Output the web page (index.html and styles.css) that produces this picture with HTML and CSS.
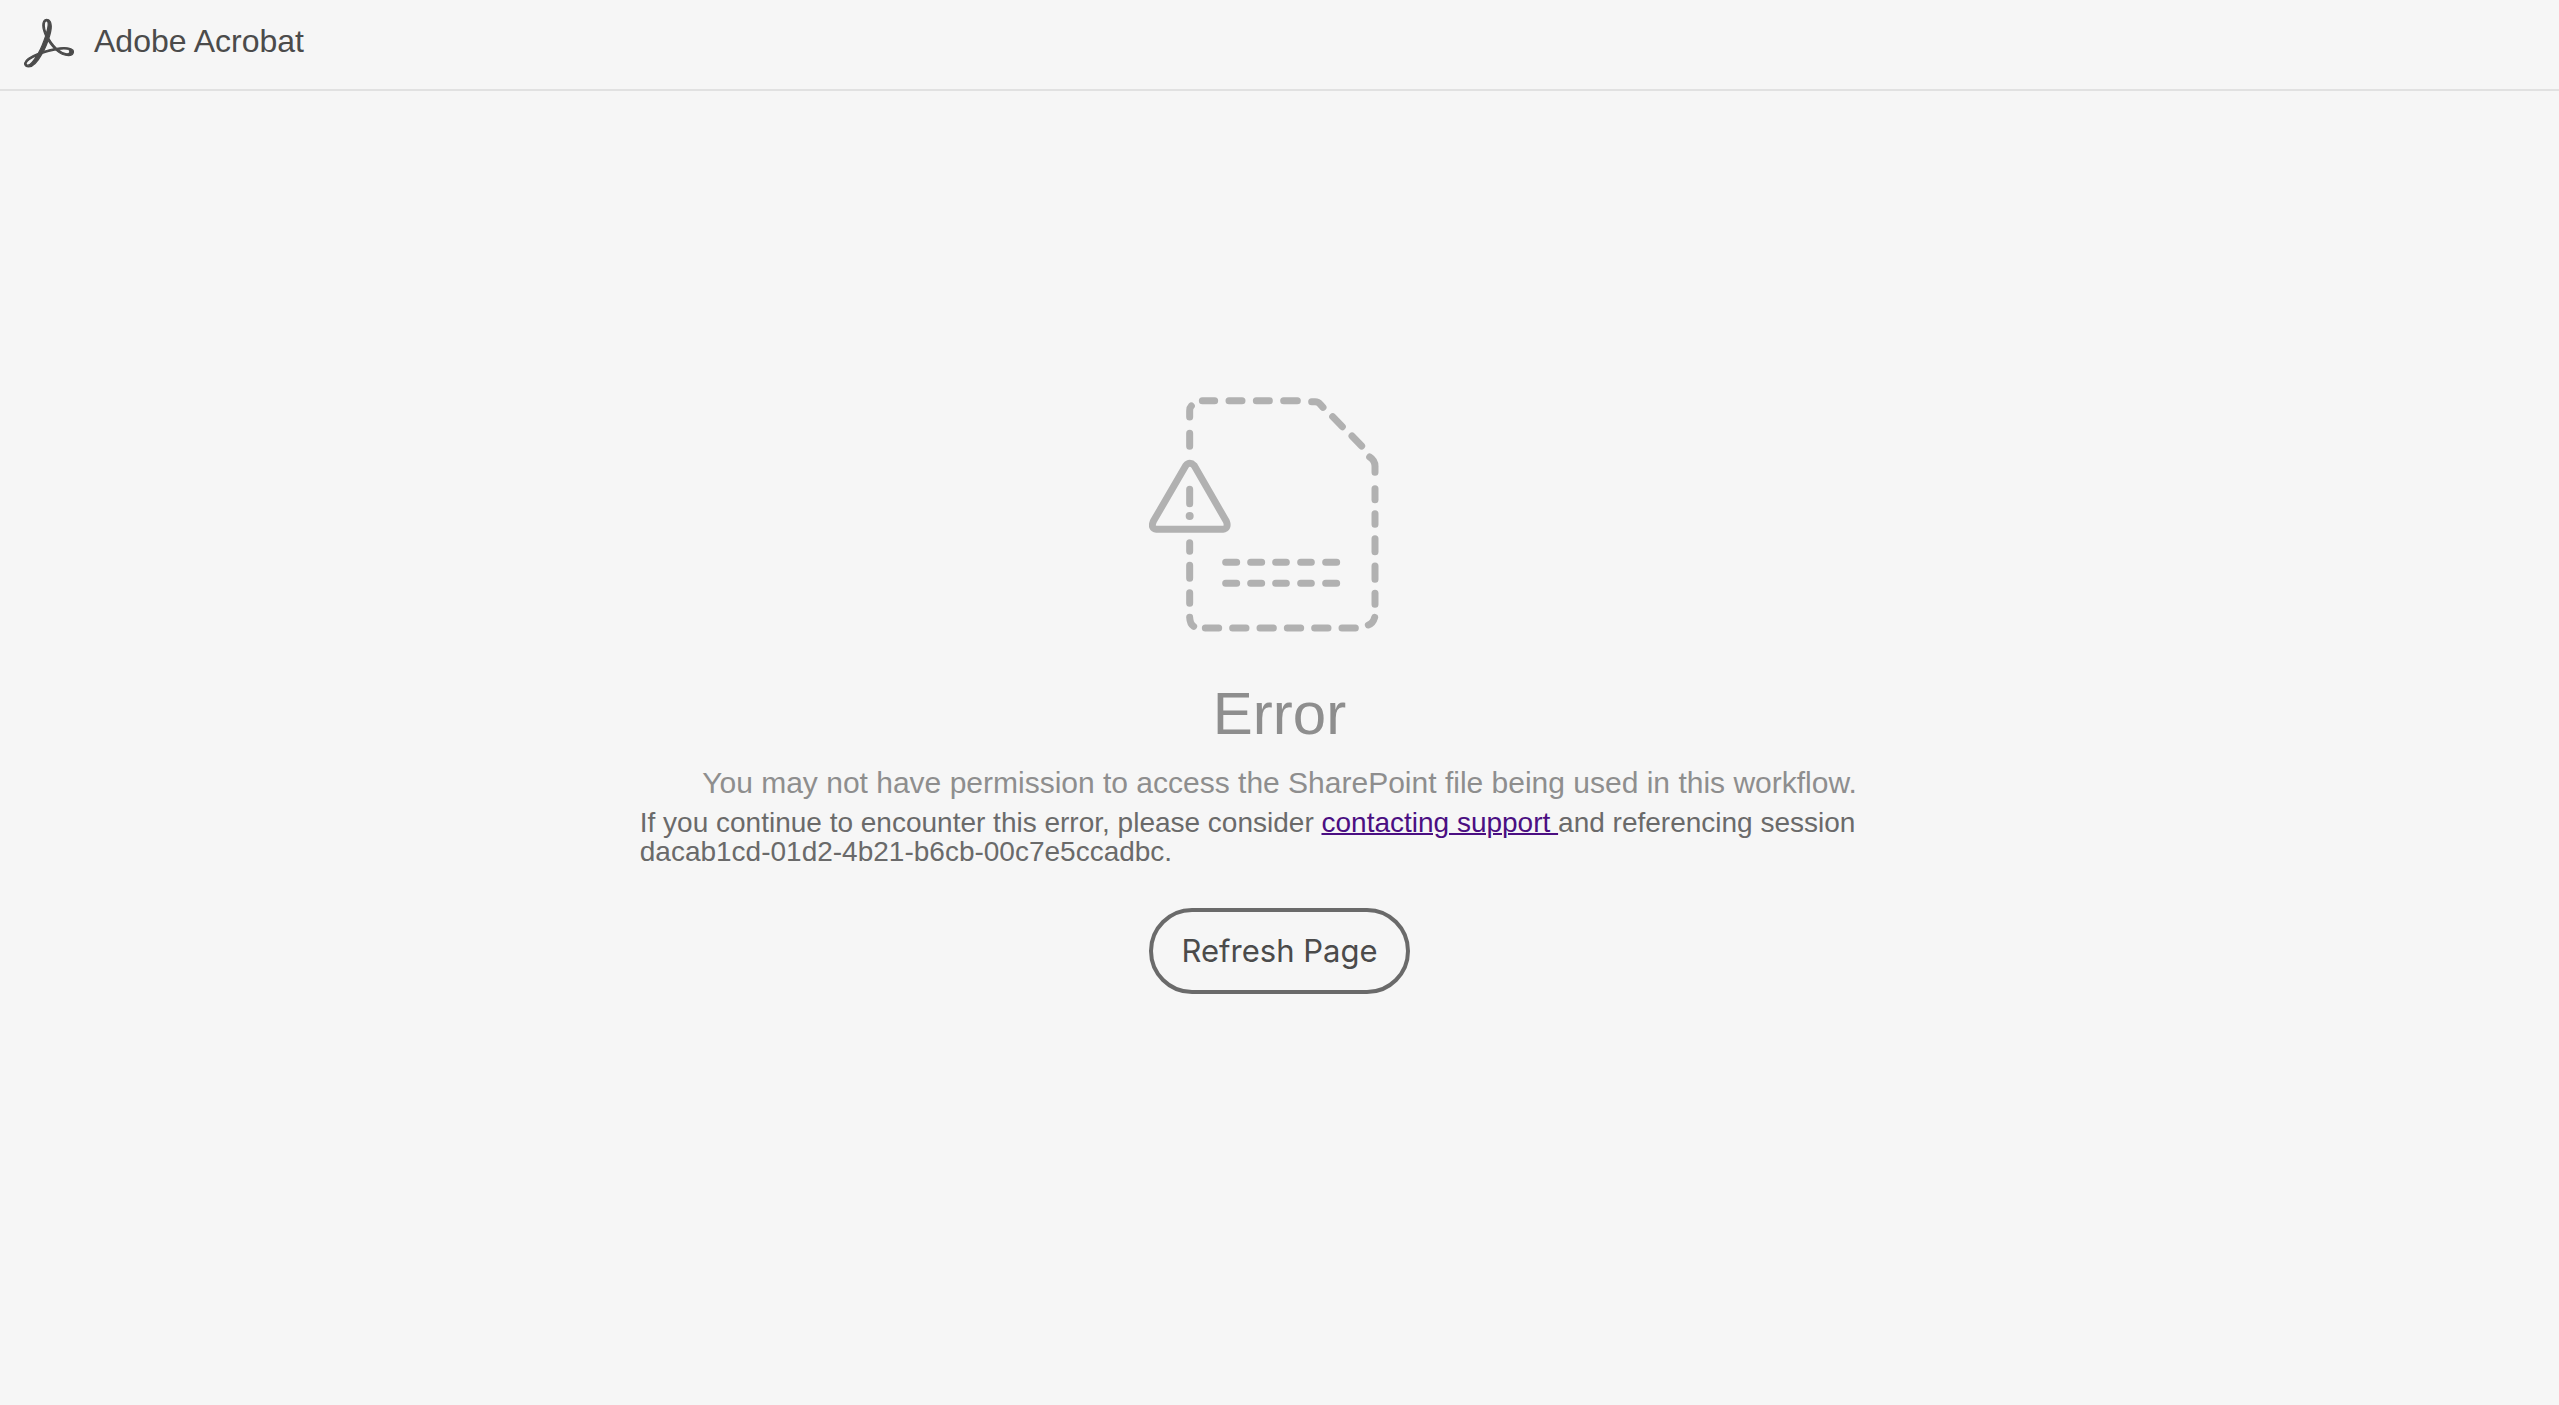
FILE: index.html
```html
<!DOCTYPE html>
<html lang="en">
<head>
<meta charset="utf-8">
<title>Adobe Acrobat</title>
<link rel="stylesheet" href="styles.css">
</head>
<body>
<header class="topbar">
  <svg class="logo" viewBox="-0.3 -0.3 24.6 24.4" aria-hidden="true"><path d="M23.63 15.3c-.71-.745-2.166-1.17-4.224-1.17-1.1 0-2.377.106-3.761.354a19.443 19.443 0 0 1-2.307-2.661c-.532-.71-.994-1.49-1.42-2.236.817-2.484 1.207-4.507 1.207-5.962 0-1.632-.603-3.336-2.342-3.336-.532 0-1.065.32-1.349.781-.78 1.384-.425 4.4.923 7.381a60.277 60.277 0 0 1-1.703 4.507c-.568 1.349-1.207 2.733-1.917 4.01C2.834 18.53.314 20.34.03 21.758c-.106.533.071 1.03.462 1.42.142.107.639.533 1.49.533 2.59 0 5.323-4.188 6.707-6.707 1.065-.355 2.13-.71 3.194-.994a34.963 34.963 0 0 1 3.407-.745c2.732 2.448 5.145 2.839 6.352 2.839 1.49 0 2.023-.604 2.2-1.1.32-.64.106-1.349-.213-1.704zm-1.42 1.03c-.107.532-.64.887-1.384.887-.213 0-.39-.036-.604-.071-1.348-.32-2.626-.994-3.903-2.059a17.717 17.717 0 0 1 2.98-.248c.746 0 1.385.035 1.81.142.497.106 1.278.426 1.1 1.348zm-7.524-1.668a38.01 38.01 0 0 0-2.945.674 39.68 39.68 0 0 0-2.52.745 40.05 40.05 0 0 0 1.207-2.555c.426-.994.78-2.023 1.136-2.981.354.603.745 1.207 1.135 1.739a50.127 50.127 0 0 0 1.987 2.378zM10.038 1.46a.768.768 0 0 1 .674-.425c.745 0 .887.851.887 1.526 0 1.135-.355 2.874-.958 4.861-1.03-2.768-1.1-5.074-.603-5.962zM6.134 17.997c-1.81 2.981-3.549 4.826-4.613 4.826a.872.872 0 0 1-.532-.177c-.213-.213-.32-.461-.249-.745.213-1.065 2.236-2.555 5.394-3.904z"/></svg>
  <span class="product">Adobe Acrobat</span>
</header>
<main class="error">
  <svg class="illustration" viewBox="57 48 786 720" aria-hidden="true">
    <g class="lines">
      <path d="M179 111v-19q0-9 5-14M217 62h37M297 62h39M379 62h39M461 62h41M545 65h10q10 0 16 8l8 9M608 110l29 30M666 168l29 30M719 231q16 10 16 28v18"/>
      <path d="M735 326v33M735 401v32M735 476v39M735 558v40M735 640v33M734 712q-5 18-19 23"/>
      <path d="M226 744h40M308 744h40M390 744h40M472 744h40M554 744h40M636 744h40"/>
      <path d="M179 160v39M179 488v26M179 556v39M179 638v32M179 712q1 20 12 27"/>
      <path d="M287 547h33M362 547h33M437 547h32M512 547h32M587 547h33M287 610h33M362 610h33M437 610h32M512 610h32M587 610h33"/>
      <path d="M167 257Q179 243 193 257L289 424Q297 445 278 448H80Q61 445 70 424ZM179 328v43"/>
    </g>
    <circle class="dot" cx="179" cy="408" r="12"/>
  </svg>
  <h1 class="title">Error</h1>
  <p class="reason">You may not have permission to access the SharePoint file being used in this workflow.</p>
  <p class="help">If you continue to encounter this error, please consider <a class="support" href="#support">contacting support </a>and referencing session dacab1cd-01d2-4b21-b6cb-00c7e5ccadbc.</p>
  <button class="refresh" type="button">Refresh Page</button>
</main>
</body>
</html>
```
FILE: styles.css
```css
body {
  margin: 0;
  background: #f6f6f6;
  color: #4b4b4b;
  font-family: "Liberation Sans", Arial, sans-serif;
}

.topbar {
  display: flex;
  align-items: flex-start;
  gap: 20px;
  padding: 18px 24px 21px;
  border-bottom: 2px solid #e1e1e1;
}

.logo {
  width: 50px;
  height: 50px;
  fill: #4b4b4b;
  stroke: #4b4b4b;
  stroke-width: 0.6;
}

.product {
  padding-top: 5px;
  font-size: 32px;
  line-height: 36px;
}

.error {
  display: flex;
  flex-direction: column;
  align-items: center;
  width: 50%;
  margin: 0 auto;
  padding: 305px 0 40px;
}

.illustration {
  width: 262px;
  height: 240px;
}

.lines {
  fill: none;
  stroke: #b1b1b1;
  stroke-width: 21;
  stroke-linecap: round;
  stroke-linejoin: round;
}

.dot {
  fill: #b1b1b1;
}

.title {
  margin: 42px 0 0;
  color: #8e8e8e;
  font-size: 60px;
  font-weight: 400;
  line-height: 72px;
}

.reason {
  margin: 13px 0 0;
  color: #8e8e8e;
  font-size: 30px;
  line-height: 40px;
}

.help {
  align-self: stretch;
  margin: 5px 0 0;
  color: #6a6a6a;
  font-size: 28px;
  line-height: 29px;
}

.support {
  color: #4b0f82;
  text-decoration-thickness: 2px;
}

.refresh {
  margin-top: 42px;
  padding: 20px 29px;
  border: 4px solid #6a6a6a;
  border-radius: 43px;
  background: transparent;
  color: #4b4b4b;
  font-family: Inter, sans-serif;
  font-size: 31px;
  line-height: 38px;
}
```
